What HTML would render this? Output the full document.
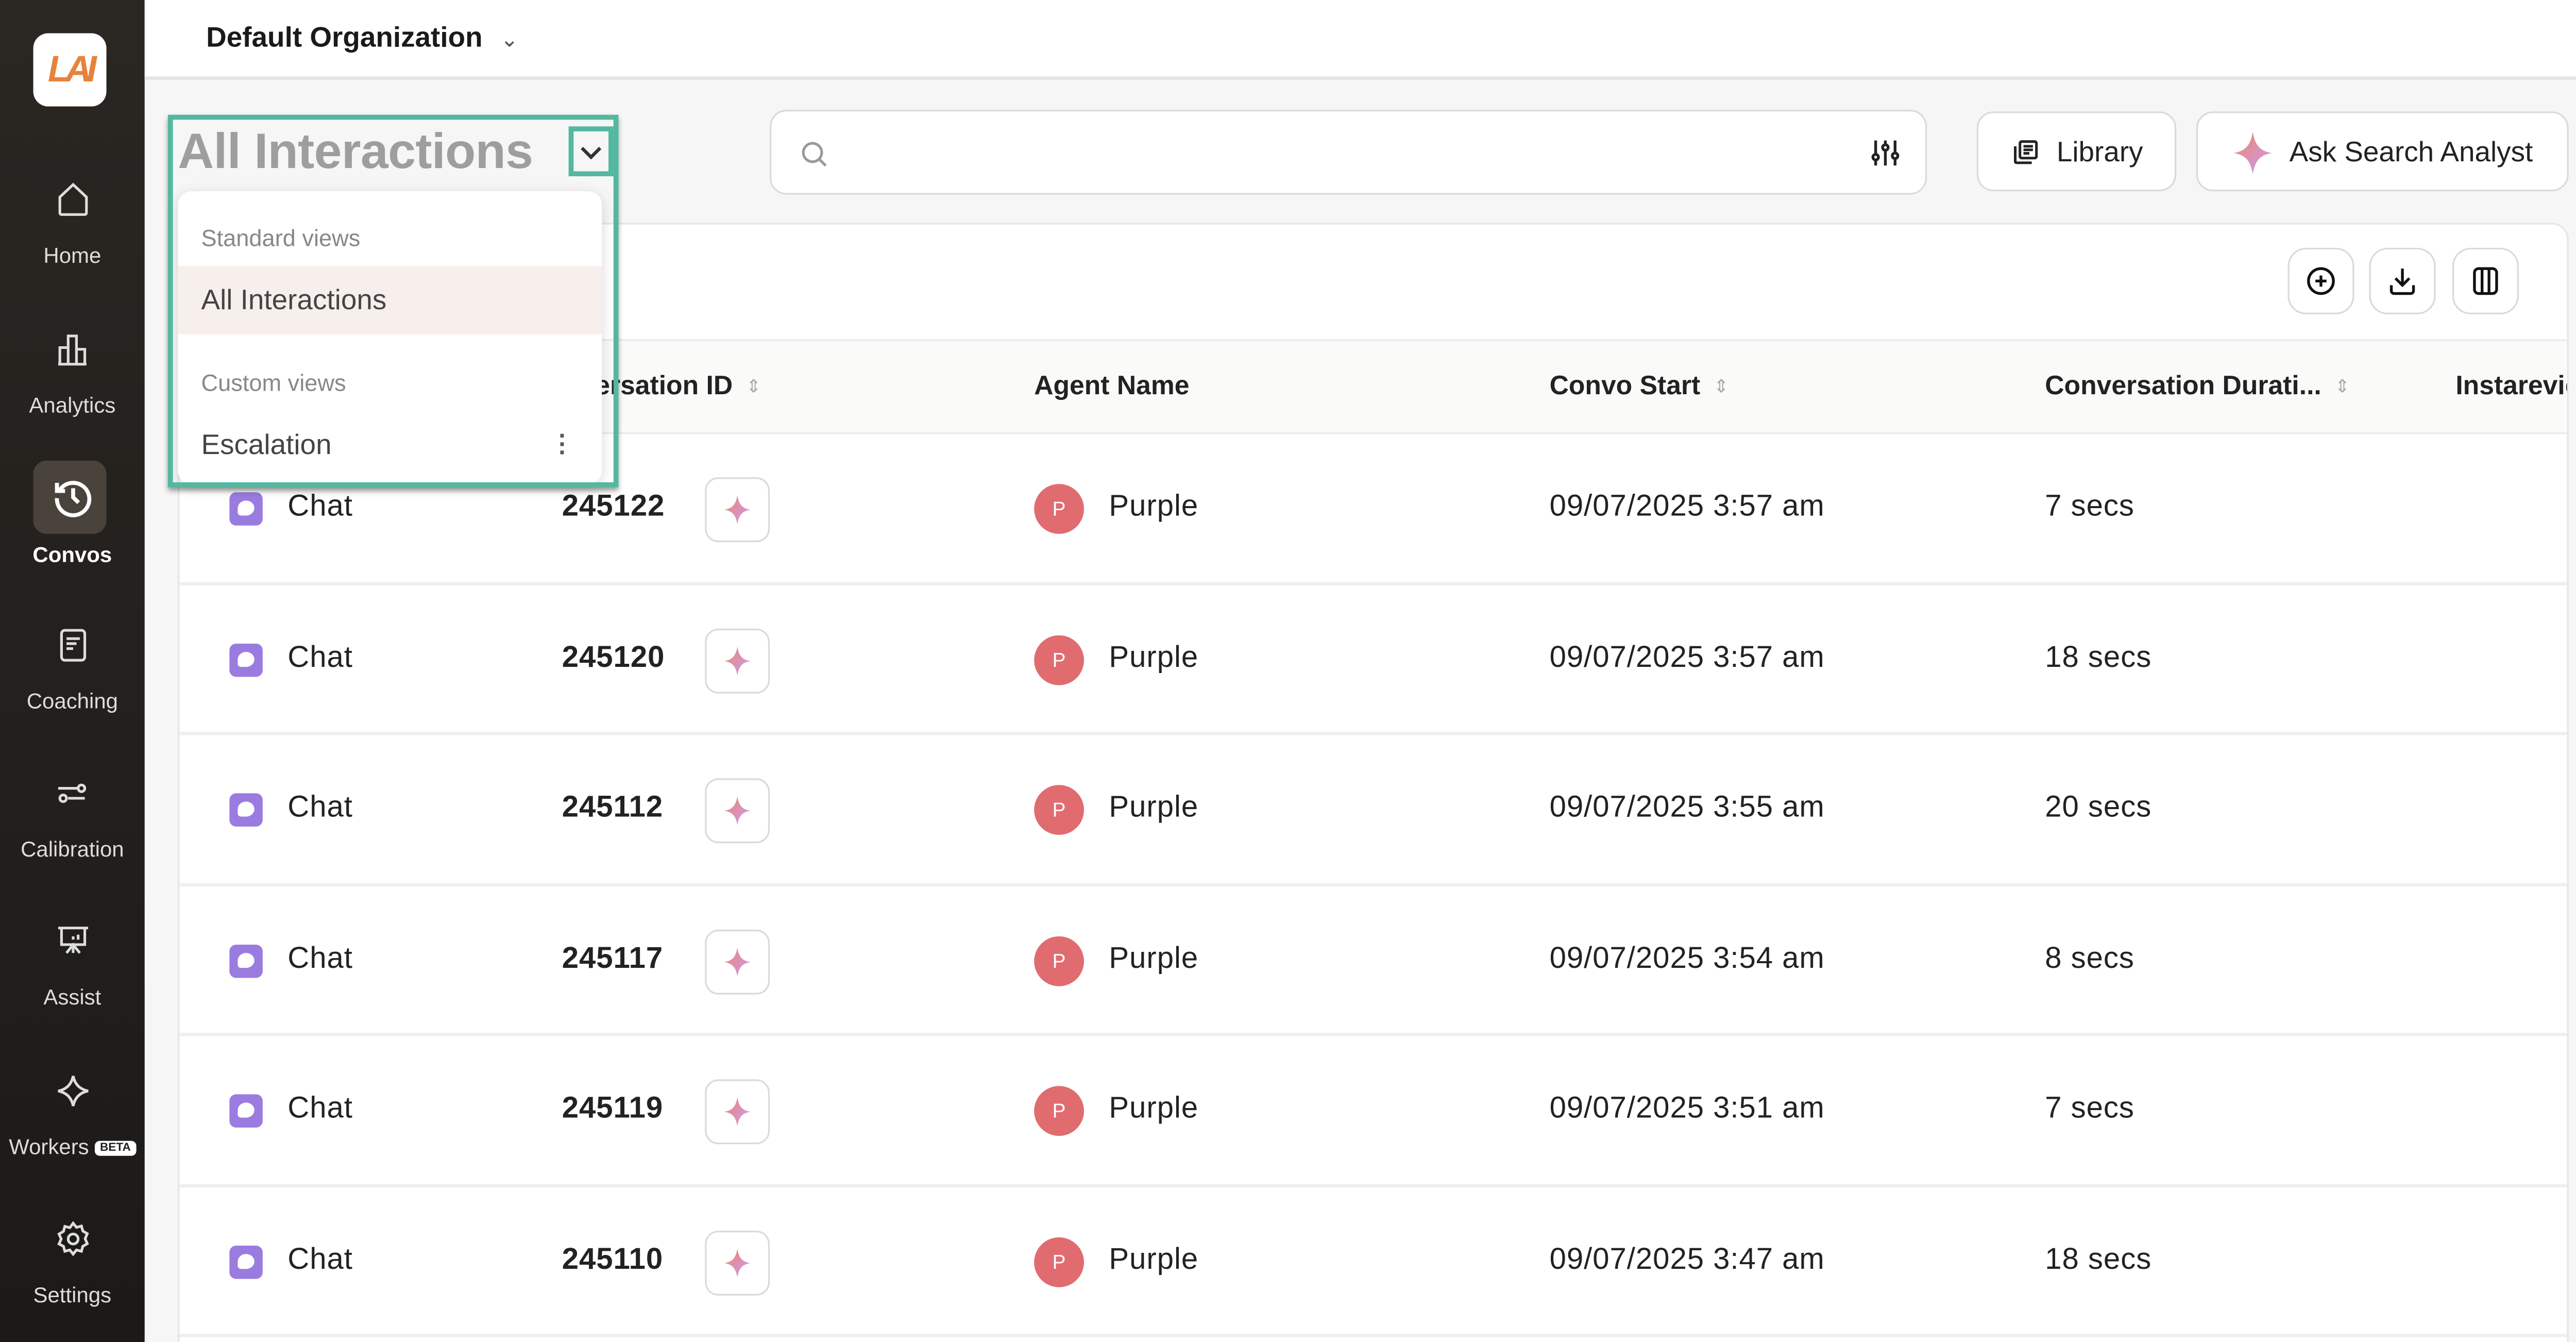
<!DOCTYPE html>
<html><head><meta charset="utf-8">
<style>
*{box-sizing:border-box;margin:0;padding:0}
html,body{width:5060px;height:2604px;overflow:hidden;background:#f6f6f6}
#s{position:absolute;left:0;top:0;width:1568px;height:807px;transform:scale(3.22704);transform-origin:0 0;font-family:"Liberation Sans",sans-serif;background:#f6f6f6;overflow:hidden}
.a{position:absolute}
.side{left:0;top:0;width:87px;height:807px;background:linear-gradient(#2a2622,#1c1a18)}
.nav{position:absolute;left:0;width:87px;text-align:center;color:#ddd;font-size:13px}
.nav svg{display:block;margin:0 auto}
.top{left:87px;top:0;width:1481px;height:48px;background:#fff;border-bottom:2px solid #e4e4e4}
.btn{background:#fff;border:1.5px solid #dcdad6;border-radius:10px}
.card{left:107px;top:134px;width:1438px;height:690px;background:#fff;border:1.5px solid #e6e6e6;border-radius:10px;overflow:hidden}
.hdr{position:absolute;left:0;top:69px;width:100%;height:57px;background:#fafaf9;border-top:1.5px solid #eaeaea;border-bottom:1.5px solid #eaeaea}
.th{position:absolute;top:19px;font-size:16px;font-weight:bold;color:#222}
.row{position:absolute;left:0;width:100%;height:90.5px;border-bottom:2px solid #efefef}
.row .c{position:absolute;top:33px;font-size:18px;letter-spacing:.3px;color:#222}
.chat{position:absolute;left:30px;top:35px;width:20px;height:20px;border-radius:4px;background:#9a7ce0}
.chat:after{content:"";position:absolute;left:5px;top:5px;width:10px;height:9px;border-radius:50% 50% 50% 20%;background:#fff}
.sp{position:absolute;left:316px;top:26px;width:39px;height:39px;border:1.5px solid #dcdad6;border-radius:8px}
.av{position:absolute;left:514px;top:30px;width:30px;height:30px;border-radius:50%;background:#e06c70;color:#fff;font-size:12px;text-align:center;line-height:30px}
.sort{display:inline-block;margin-left:8px;color:#aaa;font-weight:normal;font-size:11px;vertical-align:1px}
</style></head><body><div id="s">
<svg width="0" height="0" style="position:absolute"><defs><linearGradient id="g" x1="0" y1="0" x2="1" y2="1"><stop offset="0" stop-color="#f0866a"/><stop offset="1" stop-color="#c89cf5"/></linearGradient></defs></svg>

<div class="a side">
 <div class="a" style="left:20px;top:20px;width:44px;height:44px;background:#fff;border-radius:9px;text-align:center;line-height:44px;color:#e8823a;font-weight:bold;font-style:italic;font-size:22px;letter-spacing:-3px">LAI</div>
 <div class="nav" style="top:108px"><svg width="24" height="24" viewBox="0 0 24 24" fill="none" stroke="#ddd" stroke-width="1.6"><path d="M4 10.5L12 3l8 7.5V20a1 1 0 0 1-1 1H5a1 1 0 0 1-1-1z"/></svg><div style="margin-top:14px">Home</div></div>
 <div class="nav" style="top:198px"><svg width="24" height="24" viewBox="0 0 24 24" fill="none" stroke="#ddd" stroke-width="1.6"><path d="M4 21V11h5v10M9 21V4h5v17M14 21v-9h5v9zM3 21h17"/></svg><div style="margin-top:14px">Analytics</div></div>
 <div class="a" style="left:20px;top:277px;width:44px;height:44px;border-radius:8px;background:#4a433c"></div>
 <div class="nav" style="top:286px"><svg width="26" height="26" viewBox="0 0 24 24" fill="none" stroke="#fff" stroke-width="2.2"><path d="M4.5 8A9 9 0 1 1 3 12.5M3 4v4.5h4.5M12 7v5l3 3"/></svg><div style="margin-top:14px;color:#fff;font-weight:bold">Convos</div></div>
 <div class="nav" style="top:376px"><svg width="24" height="24" viewBox="0 0 24 24" fill="none" stroke="#ddd" stroke-width="1.6"><rect x="5" y="3" width="14" height="18" rx="2"/><path d="M8 8h8M8 11h6M8 14h4"/></svg><div style="margin-top:14px">Coaching</div></div>
 <div class="nav" style="top:465px"><svg width="24" height="24" viewBox="0 0 24 24" fill="none" stroke="#ddd" stroke-width="1.6"><path d="M3 9h12M19 15H9"/><circle cx="17" cy="9" r="2"/><circle cx="6" cy="15" r="2"/></svg><div style="margin-top:14px">Calibration</div></div>
 <div class="nav" style="top:554px"><svg width="24" height="24" viewBox="0 0 24 24" fill="none" stroke="#ddd" stroke-width="1.6"><path d="M3 4h18M5 4v10h14V4M12 14v5M8 19l4-5 4 5M9 11v0M12 9v2M15 8v3"/></svg><div style="margin-top:14px">Assist</div></div>
 <div class="nav" style="top:644px"><svg width="24" height="24" viewBox="0 0 24 24" fill="none" stroke="#ddd" stroke-width="1.6"><path d="M12 3c1 5 4 8 9 9-5 1-8 4-9 9-1-5-4-8-9-9 5-1 8-4 9-9z"/></svg><div style="margin-top:14px">Workers <span style="background:#fff;color:#222;font-size:7px;font-weight:bold;padding:1px 3px;border-radius:3px;vertical-align:2px">BETA</span></div></div>
 <div class="nav" style="top:733px"><svg width="24" height="24" viewBox="0 0 24 24" fill="none" stroke="#ddd" stroke-width="1.6"><circle cx="12" cy="12" r="3"/><path d="M12 2.5l2 2.5 3-.8.8 3 2.7 1.6-1.3 3 1.3 3-2.7 1.6-.8 3-3-.8-2 2.5-2-2.5-3 .8-.8-3L3.5 15l1.3-3-1.3-3 2.7-1.6.8-3 3 .8z"/></svg><div style="margin-top:14px">Settings</div></div>
</div>

<div class="a top"><div class="a" style="left:37px;top:13px;font-size:17px;font-weight:bold;color:#1a1a1a">Default Organization <span style="font-weight:normal;font-size:13px;color:#555;margin-left:6px">&#8964;</span></div></div>

<div class="a" style="left:107px;top:75px;font-size:30px;font-weight:bold;color:#9e9e9e;letter-spacing:-0.2px">All Interactions</div>
<div class="a" style="left:342px;top:76px;width:27px;height:30px;border:3px solid #52b8a0;background:#f6f6f6"><svg width="21" height="24" viewBox="0 0 21 24"><path d="M5 10l5.5 5.5L16 10" fill="none" stroke="#333" stroke-width="2"/></svg></div>

<div class="a btn" style="left:463px;top:66px;width:696px;height:51px;border-radius:10px"><svg class="a" style="left:16px;top:16px" width="19" height="19" viewBox="0 0 24 24" fill="none" stroke="#999" stroke-width="2"><circle cx="11" cy="11" r="7"/><path d="M16 16l5 5"/></svg><svg class="a" style="left:660px;top:15px" width="20" height="20" viewBox="0 0 24 24" fill="none" stroke="#222" stroke-width="2"><path d="M5 3v18M12 3v18M19 3v18"/><circle cx="5" cy="15" r="2" fill="#fff"/><circle cx="12" cy="8" r="2" fill="#fff"/><circle cx="19" cy="14" r="2" fill="#fff"/></svg></div>
<div class="a btn" style="left:1189px;top:67px;width:120px;height:48px"><svg class="a" style="left:20px;top:15px" width="17" height="17" viewBox="0 0 24 24" fill="none" stroke="#222" stroke-width="2.2"><path d="M3 7v13a1 1 0 0 0 1 1h13"/><rect x="7" y="3" width="14" height="14" rx="1.5"/><path d="M10 7h8M10 10h8M10 13h5"/></svg><div class="a" style="left:47px;top:14px;font-size:17px;color:#222">Library</div></div>
<div class="a btn" style="left:1321px;top:67px;width:224px;height:48px"><svg class="a" style="left:19px;top:10px" width="28" height="28" viewBox="0 0 24 24"><path d="M12 1c1 6 3 10 10 11-7 1-9 5-10 11-1-6-3-10-10-11 7-1 9-5 10-11z" fill="url(#g)"/></svg><div class="a" style="left:55px;top:14px;font-size:17px;color:#222">Ask Search Analyst</div></div>

<div class="a card">
 <div class="a btn" style="left:1268px;top:14px;width:40px;height:40px;border-radius:11px"><svg class="a" style="left:9px;top:9px" width="20" height="20" viewBox="0 0 24 24" fill="none" stroke="#111" stroke-width="2"><circle cx="12" cy="12" r="9"/><path d="M12 8v8M8 12h8"/></svg></div>
 <div class="a btn" style="left:1317px;top:14px;width:40px;height:40px;border-radius:11px"><svg class="a" style="left:9px;top:9px" width="20" height="20" viewBox="0 0 24 24" fill="none" stroke="#111" stroke-width="2"><path d="M12 3v12M7 10l5 5 5-5M4 15v4a2 2 0 0 0 2 2h12a2 2 0 0 0 2-2v-4"/></svg></div>
 <div class="a btn" style="left:1367px;top:14px;width:40px;height:40px;border-radius:11px"><svg class="a" style="left:9px;top:9px" width="20" height="20" viewBox="0 0 24 24" fill="none" stroke="#111" stroke-width="2"><rect x="4" y="3" width="16" height="18" rx="3"/><path d="M9.5 3v18M14.5 3v18"/></svg></div>
 <div class="hdr">
  <div class="th" style="left:210px">Conversation ID<span class="sort">&#8661;</span></div>
  <div class="th" style="left:514px">Agent Name</div>
  <div class="th" style="left:824px">Convo Start<span class="sort">&#8661;</span></div>
  <div class="th" style="left:1122px">Conversation Durati...<span class="sort">&#8661;</span></div>
  <div class="th" style="left:1369px">Instareview</div>
 </div>
 <div class="row" style="top:126px"><div class="chat"></div><div class="c" style="left:65px">Chat</div><div class="c" style="left:230px;font-weight:bold">245122</div><div class="sp"><svg class="a" style="left:9px;top:9px" width="19" height="19" viewBox="0 0 24 24"><path d="M12 1c1 6 3 10 10 11-7 1-9 5-10 11-1-6-3-10-10-11 7-1 9-5 10-11z" fill="url(#g)"/></svg></div><div class="av">P</div><div class="c" style="left:559px">Purple</div><div class="c" style="left:824px">09/07/2025 3:57 am</div><div class="c" style="left:1122px">7 secs</div></div>
 <div class="row" style="top:216.5px"><div class="chat"></div><div class="c" style="left:65px">Chat</div><div class="c" style="left:230px;font-weight:bold">245120</div><div class="sp"><svg class="a" style="left:9px;top:9px" width="19" height="19" viewBox="0 0 24 24"><path d="M12 1c1 6 3 10 10 11-7 1-9 5-10 11-1-6-3-10-10-11 7-1 9-5 10-11z" fill="url(#g)"/></svg></div><div class="av">P</div><div class="c" style="left:559px">Purple</div><div class="c" style="left:824px">09/07/2025 3:57 am</div><div class="c" style="left:1122px">18 secs</div></div>
 <div class="row" style="top:307px"><div class="chat"></div><div class="c" style="left:65px">Chat</div><div class="c" style="left:230px;font-weight:bold">245112</div><div class="sp"><svg class="a" style="left:9px;top:9px" width="19" height="19" viewBox="0 0 24 24"><path d="M12 1c1 6 3 10 10 11-7 1-9 5-10 11-1-6-3-10-10-11 7-1 9-5 10-11z" fill="url(#g)"/></svg></div><div class="av">P</div><div class="c" style="left:559px">Purple</div><div class="c" style="left:824px">09/07/2025 3:55 am</div><div class="c" style="left:1122px">20 secs</div></div>
 <div class="row" style="top:397.5px"><div class="chat"></div><div class="c" style="left:65px">Chat</div><div class="c" style="left:230px;font-weight:bold">245117</div><div class="sp"><svg class="a" style="left:9px;top:9px" width="19" height="19" viewBox="0 0 24 24"><path d="M12 1c1 6 3 10 10 11-7 1-9 5-10 11-1-6-3-10-10-11 7-1 9-5 10-11z" fill="url(#g)"/></svg></div><div class="av">P</div><div class="c" style="left:559px">Purple</div><div class="c" style="left:824px">09/07/2025 3:54 am</div><div class="c" style="left:1122px">8 secs</div></div>
 <div class="row" style="top:488px"><div class="chat"></div><div class="c" style="left:65px">Chat</div><div class="c" style="left:230px;font-weight:bold">245119</div><div class="sp"><svg class="a" style="left:9px;top:9px" width="19" height="19" viewBox="0 0 24 24"><path d="M12 1c1 6 3 10 10 11-7 1-9 5-10 11-1-6-3-10-10-11 7-1 9-5 10-11z" fill="url(#g)"/></svg></div><div class="av">P</div><div class="c" style="left:559px">Purple</div><div class="c" style="left:824px">09/07/2025 3:51 am</div><div class="c" style="left:1122px">7 secs</div></div>
 <div class="row" style="top:578.5px"><div class="chat"></div><div class="c" style="left:65px">Chat</div><div class="c" style="left:230px;font-weight:bold">245110</div><div class="sp"><svg class="a" style="left:9px;top:9px" width="19" height="19" viewBox="0 0 24 24"><path d="M12 1c1 6 3 10 10 11-7 1-9 5-10 11-1-6-3-10-10-11 7-1 9-5 10-11z" fill="url(#g)"/></svg></div><div class="av">P</div><div class="c" style="left:559px">Purple</div><div class="c" style="left:824px">09/07/2025 3:47 am</div><div class="c" style="left:1122px">18 secs</div></div>
</div>

<div class="a" style="left:107px;top:115px;width:255px;height:176px;background:#fff;border-radius:8px;box-shadow:0 2px 8px rgba(0,0,0,.15)">
 <div class="a" style="left:14px;top:20px;font-size:14px;color:#888">Standard views</div>
 <div class="a" style="left:0;top:45px;width:255px;height:41px;background:#f7efec"></div>
 <div class="a" style="left:14px;top:56px;font-size:17px;color:#444">All Interactions</div>
 <div class="a" style="left:14px;top:107px;font-size:14px;color:#888">Custom views</div>
 <div class="a" style="left:14px;top:143px;font-size:17px;color:#444">Escalation</div>
 <div class="a" style="left:229px;top:145px;font-size:15px;color:#555;line-height:5px;font-weight:bold">·<br>·<br>·</div>
</div>
<div class="a" style="left:101px;top:69px;width:271px;height:224px;border:3px solid #52b8a0;box-shadow:0 2px 3px rgba(0,0,0,.4)"></div>
</div></body></html>
